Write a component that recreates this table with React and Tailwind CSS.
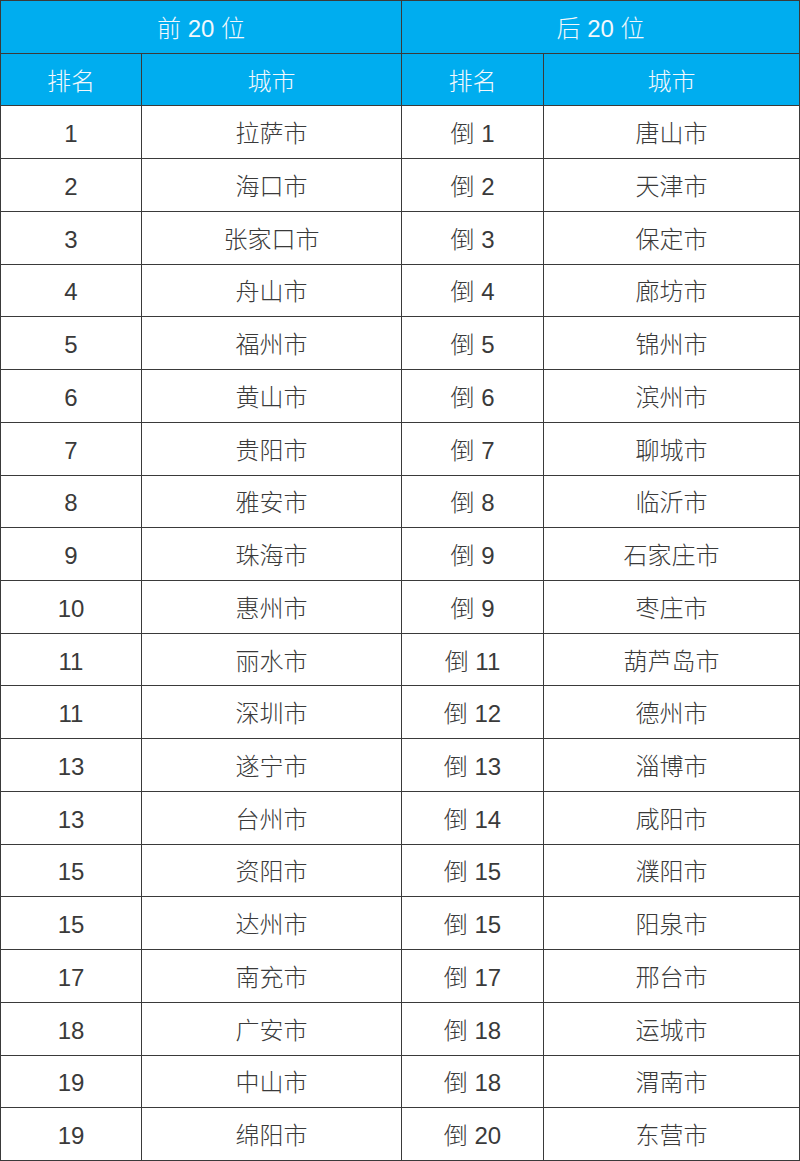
const top = [
  ['1', '拉萨市'], ['2', '海口市'], ['3', '张家口市'], ['4', '舟山市'], ['5', '福州市'],
  ['6', '黄山市'], ['7', '贵阳市'], ['8', '雅安市'], ['9', '珠海市'], ['10', '惠州市'],
  ['11', '丽水市'], ['11', '深圳市'], ['13', '遂宁市'], ['13', '台州市'], ['15', '资阳市'],
  ['15', '达州市'], ['17', '南充市'], ['18', '广安市'], ['19', '中山市'], ['19', '绵阳市'],
];

const bottom = [
  ['倒 1', '唐山市'], ['倒 2', '天津市'], ['倒 3', '保定市'], ['倒 4', '廊坊市'], ['倒 5', '锦州市'],
  ['倒 6', '滨州市'], ['倒 7', '聊城市'], ['倒 8', '临沂市'], ['倒 9', '石家庄市'], ['倒 9', '枣庄市'],
  ['倒 11', '葫芦岛市'], ['倒 12', '德州市'], ['倒 13', '淄博市'], ['倒 14', '咸阳市'], ['倒 15', '濮阳市'],
  ['倒 15', '阳泉市'], ['倒 17', '邢台市'], ['倒 18', '运城市'], ['倒 18', '渭南市'], ['倒 20', '东营市'],
];

const cell = 'flex items-center justify-center pt-[4px] border-r border-b border-[#3a3a3a]';
const head = `${cell} bg-[#00adef] text-[#f2f8fc]`;
const body = `${cell} text-[#3a3a3a]`;

export default function App() {
  return (
    <div
      className="w-[800px] h-[1161px] bg-white border-l border-t border-[#3a3a3a] grid grid-cols-[141px_260px_142px_256px] grid-rows-[repeat(22,minmax(0,1fr))] text-[24px] font-light"
      style={{ fontFamily: '"Liberation Sans", "Noto Sans CJK SC", sans-serif' }}
    >
      <div className={`${head} col-span-2`}>前 20 位</div>
      <div className={`${head} col-span-2`}>后 20 位</div>
      <div className={head}>排名</div>
      <div className={head}>城市</div>
      <div className={head}>排名</div>
      <div className={head}>城市</div>
      {top.map((row, i) => (
        <div key={i} className="contents">
          <div className={body}>{row[0]}</div>
          <div className={body}>{row[1]}</div>
          <div className={body}>{bottom[i][0]}</div>
          <div className={body}>{bottom[i][1]}</div>
        </div>
      ))}
    </div>
  );
}
